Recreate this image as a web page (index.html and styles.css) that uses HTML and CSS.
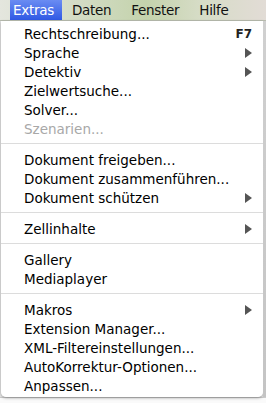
FILE: index.html
```html
<!DOCTYPE html>
<html lang="de">
<head>
  <meta charset="UTF-8">
  <title>Extras</title>
  <link rel="stylesheet" href="styles.css">
</head>
<body>
  <!-- Menüleiste -->
  <div class="menubar">
    <span class="top active">Extras</span>
    <span class="top">Daten</span>
    <span class="top">Fenster</span>
    <span class="top">Hilfe</span>
  </div>

  <div class="desk">
    <!-- Extras-Menü -->
    <div class="menu">
      <div class="item">Rechtschreibung...<span class="key">F7</span></div>
      <div class="item sub">Sprache</div>
      <div class="item sub">Detektiv</div>
      <div class="item">Zielwertsuche...</div>
      <div class="item">Solver...</div>
      <div class="item off">Szenarien...</div>
      <div class="sep"></div>
      <div class="item">Dokument freigeben...</div>
      <div class="item">Dokument zusammenführen...</div>
      <div class="item sub">Dokument schützen</div>
      <div class="sep"></div>
      <div class="item sub">Zellinhalte</div>
      <div class="sep"></div>
      <div class="item">Gallery</div>
      <div class="item">Mediaplayer</div>
      <div class="sep"></div>
      <div class="item sub">Makros</div>
      <div class="item">Extension Manager...</div>
      <div class="item">XML-Filtereinstellungen...</div>
      <div class="item">AutoKorrektur-Optionen...</div>
      <div class="item">Anpassen...</div>
    </div>
    <div class="edge"></div>
  </div>
  <div class="sheet"></div>
</body>
</html>
```

FILE: styles.css
```css
body {
  margin: 0;
  font-family: "DejaVu Sans", sans-serif;
  font-size: 13.5px;
  color: #000;
  background: #f2f2f2;
  overflow: hidden;
}

.menubar {
  display: flex;
  height: 21px;
  font-size: 13.5px;
  letter-spacing: -0.3px;
  background: linear-gradient(90deg, #e4e6de 0%, #d0dac0 35%, #c4d3ac 55%, #d6dcc6 75%, #e2dcd6 100%);
  border-bottom: 1px solid #b9bdb0;
  box-sizing: border-box;
}

.top {
  line-height: 21px;
  padding: 0 10px;
  color: #111;
}

.top.active {
  width: 52px;
  margin-left: 10px;
  padding: 0 0 0 3px;
  box-sizing: border-box;
  color: #fff;
  background: linear-gradient(#6a8cf2, #3059e4);
}

.desk {
  display: flex;
  background: #e6e6e6;
}

.menu {
  width: 262px;
  margin-left: 1px;
  padding: 3px 0 2px;
  background: rgba(255, 255, 255, 0.97);
  border-radius: 0 0 5px 5px;
  box-shadow: 0 1px 3px rgba(0, 0, 0, 0.35);
}

.edge {
  flex: 1;
  background: linear-gradient(#d0d0d0, #c4c4c4);
}

.item {
  display: flex;
  justify-content: space-between;
  align-items: center;
  height: 19px;
  padding: 0 11px 0 23px;
  white-space: nowrap;
}

.item.off {
  color: #a8a8a8;
}

.item.sub::after {
  content: "";
  border-left: 7px solid #555;
  border-top: 5px solid transparent;
  border-bottom: 5px solid transparent;
}

.key {
  font-size: 12px;
  font-weight: bold;
  color: #222;
}

.sep {
  height: 1px;
  margin: 5px 0 6px;
  background: #dcdcdc;
}

.sheet {
  height: 20px;
  background: #fafafa;
  border-top: 1px solid #ccc;
}
```
